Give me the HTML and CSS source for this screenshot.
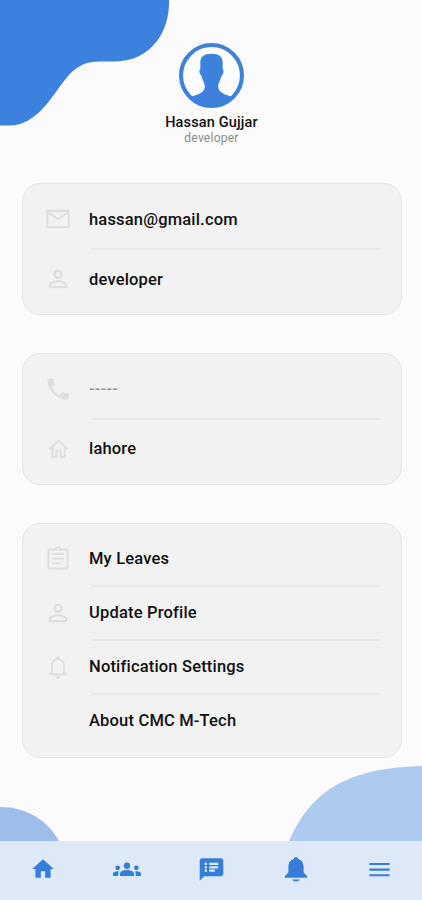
FILE: index.html
```html
<!DOCTYPE html>
<html lang="en">
<head>
<meta charset="utf-8">
<title>Profile</title>
<link rel="stylesheet" href="styles.css">
</head>
<body>
<svg class="blobs" viewBox="0 0 422 900" aria-hidden="true">
  <path fill="#3d81de" d="M0 0H169C170 32 151 61 115 61.500C94 62 84 59 68 76C52 95 38 126 8 125.500L0 125.500Z"/>
  <path fill="#9dbdea" d="M0 807C26 807 48 820 59.500 842H0Z"/>
  <path fill="#aecaef" d="M288.500 842C310 793 344 768 422 766V842Z"/>
</svg>
<main class="page">
  <header class="profile">
    <svg class="avatar" viewBox="0 0 64 64"><circle cx="32" cy="32" r="30" fill="#fcfdfe" stroke="#3d81dc" stroke-width="4"/><path fill="#3d81dc" d="M32 10.500C24.500 10.500 21 13.500 21 19V26C19.500 26 20 31 22 32C23 37 25.500 39 25.500 43C25.500 49 18 51 11 53C22 65 42 65 53 53C46 51 38.500 49 38.500 43C38.500 39 41 37 42 32C44 31 44.500 26 43 26V19C43 13.500 39.500 10.500 32 10.500Z"/></svg>
    <h1 class="name">Hassan Gujjar</h1>
    <p class="role">developer</p>
  </header>
  <section class="card">
    <div class="row"><svg class="icon" viewBox="0 0 24 24"><path d="M22 4H2v16h20V4zm-1.700 14.300H3.700V7.700l8.300 5.200 8.300-5.200v10.600zM12 11L4 6h16l-8 5z"/></svg><span class="label">hassan@gmail.com</span></div>
    <div class="row"><svg class="icon" viewBox="0 0 24 24"><path d="M12 5.900a2.100 2.100 0 1 1 0 4.200 2.100 2.100 0 0 1 0-4.200m0 9c2.970 0 6.100 1.460 6.100 2.100v1.100H5.900V17c0-.64 3.130-2.100 6.100-2.100M12 4a4 4 0 1 0 0 8 4 4 0 0 0 0-8zm0 9c-2.670 0-8 1.340-8 4v3h16v-3c0-2.660-5.330-4-8-4z"/></svg><span class="label">developer</span></div>
  </section>
  <section class="card">
    <div class="row"><svg class="icon" viewBox="0 0 24 24"><path d="M6.620 10.790c1.440 2.830 3.760 5.140 6.590 6.590l2.200-2.200c.27-.27.67-.36 1.020-.24 1.120.37 2.330.57 3.570.57.550 0 1 .45 1 1V20c0 .55-.45 1-1 1C10.610 21 3 13.390 3 4c0-.55.45-1 1-1h3.500c.55 0 1 .45 1 1 0 1.250.2 2.450.57 3.570.11.35.030.74-.25 1.020l-2.200 2.200z"/></svg><span class="label muted">-----</span></div>
    <div class="row"><svg class="icon small" viewBox="0 0 24 24"><path d="M12 5.190l5 4.500V18h-2v-6H9v6H7V9.690l5-4.500M12 2.500L2 11.500h3V20h6v-6h2v6h6v-8.500h3L12 2.500z"/></svg><span class="label address">lahore</span></div>
  </section>
  <section class="card menu">
    <div class="row"><svg class="icon" viewBox="0 0 24 24"><path d="M7 15h7v1.500H7zm0-4h10v1.500H7zm0-4h10v1.500H7zm12-4h-4.180a3 3 0 0 0-5.640 0H5a2 2 0 0 0-2 2v14a2 2 0 0 0 2 2h14a2 2 0 0 0 2-2V5a2 2 0 0 0-2-2zm-7-.25a.75.75 0 1 1 0 1.500.75.75 0 0 1 0-1.500zM19.300 19.300H4.700V4.700h14.600v14.600z"/></svg><span class="label">My Leaves</span></div>
    <div class="row"><svg class="icon" viewBox="0 0 24 24"><path d="M12 5.900a2.100 2.100 0 1 1 0 4.200 2.100 2.100 0 0 1 0-4.200m0 9c2.970 0 6.100 1.460 6.100 2.100v1.100H5.900V17c0-.64 3.130-2.100 6.100-2.100M12 4a4 4 0 1 0 0 8 4 4 0 0 0 0-8zm0 9c-2.670 0-8 1.340-8 4v3h16v-3c0-2.660-5.330-4-8-4z"/></svg><span class="label">Update Profile</span></div>
    <div class="row"><svg class="icon" viewBox="0 0 24 24"><path d="M12 22c1.100 0 2-.9 2-2h-4c0 1.100.9 2 2 2zm6-6v-5c0-3.070-1.630-5.640-4.500-6.320V4a1.500 1.500 0 0 0-3 0v.68C7.640 5.360 6 7.920 6 11v5l-2 2v1h16v-1l-2-2zm-1.500 1.300h-9V11c0-2.800 1.700-5 4.500-5s4.500 2.200 4.500 5v6.300z"/></svg><span class="label">Notification Settings</span></div>
    <div class="row"><span class="icon"></span><span class="label">About CMC M-Tech</span></div>
  </section>
</main>
<nav class="tabs">
  <a><svg class="tab-icon home" viewBox="0 0 24 24"><path d="M10 20v-6h4v6h5v-8h3L12 3 2 12h3v8z"/></svg></a>
  <a><svg class="tab-icon" viewBox="0 0 24 24"><path d="M12 12.750c1.630 0 3.070.39 4.240.9 1.080.48 1.760 1.560 1.760 2.730V18H6v-1.610c0-1.180.68-2.260 1.760-2.730 1.170-.52 2.610-.91 4.240-.91zM4 13a2 2 0 1 0 0-4 2 2 0 0 0 0 4zm1.130 1.100A7 7 0 0 0 1.220 14.580 2.010 2.010 0 0 0 0 16.430V18h4.500v-1.610c0-.83.23-1.610.63-2.290zM20 13a2 2 0 1 0 0-4 2 2 0 0 0 0 4zm4 3.430c0-.81-.48-1.530-1.220-1.850a7 7 0 0 0-3.910-.48c.4.680.63 1.460.63 2.290V18H24v-1.570zM12 6.500a2.700 2.700 0 1 1 0 5.400 2.700 2.700 0 0 1 0-5.400z"/></svg></a>
  <a><svg class="tab-icon chat" viewBox="0 0 24 24"><path d="M20.500 2H3.500c-1.100 0-1.990.9-1.990 2L1.500 22l4-4h15c1.100 0 2-.9 2-2V4c0-1.100-.9-2-2-2zM8 14H6v-2h2v2zm0-3H6V9h2v2zm0-3H6V6h2v2zm7 6h-5v-2h5v2zm3-3h-8V9h8v2zm0-3h-8V6h8v2z"/></svg></a>
  <a><svg class="tab-icon" viewBox="0 0 24 24"><path d="M12 22.700c1.800 0 2.900-.7 3.200-1.700H8.800c.3 1 1.400 1.700 3.200 1.700zm6.500-7.700V10c0-3.300-1.700-5.800-4.700-6.600C13.700 2.400 13 1.700 12 1.700s-1.700.7-1.800 1.700C7.200 4.200 5.500 6.700 5.500 10v5L2.500 18v1.500h19V18z"/></svg></a>
  <a><svg class="tab-icon lines" viewBox="0 0 24 24"><path d="M3 18h18v-1.800H3v1.800zm0-5h18v-1.800H3v1.800zm0-6.800V8h18V6.200H3z"/></svg></a>
</nav>
</body>
</html>
```
FILE: styles.css
```css
* { box-sizing: border-box; }
body {
  margin: 0;
  height: 900px;
  display: flex;
  flex-direction: column;
  overflow: hidden;
  background: #fbfbfb;
  font-family: Roboto, sans-serif;
  color: #111;
}
.blobs { position: absolute; inset: 0; width: 422px; height: 900px; z-index: -1; }
.page { flex: 1; padding: 43px 20px 0 22px; }
.profile {
  height: 140px;
  margin-right: 1px;
  display: flex;
  flex-direction: column;
  align-items: center;
}
.avatar { width: 65px; height: 65px; }
.name { margin: 6px 0 0; font-size: 14.500px; line-height: 17px; font-weight: 500; letter-spacing: .15px; }
.role { margin: 0; font-size: 12px; line-height: 15px; color: #8b8b8b; letter-spacing: .25px; }
.card {
  height: 132px;
  margin-bottom: 38px;
  padding: 5px 21px 0 21px;
  border: 1px solid #e6e6e6;
  border-radius: 18px;
  background: #f2f2f2;
}
.row {
  position: relative;
  height: 60px;
  display: flex;
  align-items: center;
  gap: 17px;
}
.row + .row::before {
  content: "";
  position: absolute;
  left: 47px;
  right: 0;
  top: -1px;
  height: 2px;
  background: #e9e9e9;
}
.icon { width: 28px; height: 28px; flex: none; fill: #dedede; }
.icon.small { width: 25px; height: 25px; margin: 0 1.500px; }
.label { padding-top: 2px; font-size: 16.500px; line-height: 22px; font-weight: 500; letter-spacing: .18px; }
.muted { padding-top: 0; color: #999; }
.address { padding-top: 0; }
.menu { height: 235px; padding-top: 8px; }
.menu .row { height: 54px; }
.menu .label { padding-top: 0; }
.tabs {
  height: 59px;
  padding: 0 0 3px 1px;
  display: grid;
  grid-template-columns: repeat(5, 1fr);
  background: #dee9f8;
}
.tabs a { display: flex; align-items: center; justify-content: center; }
.tab-icon { width: 28px; height: 28px; fill: #367dd9; }
.home { width: 26px; height: 26px; }
.lines, .chat { width: 27px; height: 27px; }
```
